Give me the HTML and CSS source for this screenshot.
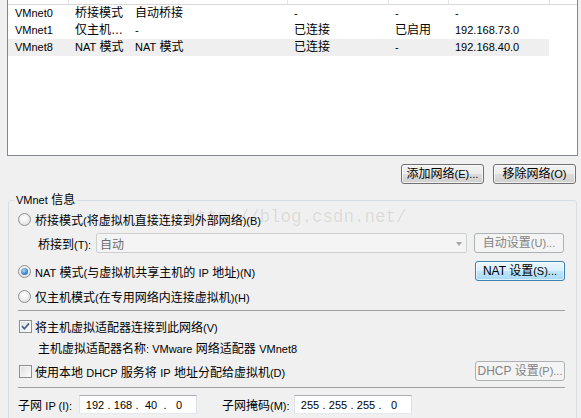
FILE: index.html
```
<!DOCTYPE html>
<html lang="zh-CN">
<head>
<meta charset="utf-8">
<title>虚拟网络编辑器</title>
<link rel="stylesheet" href="styles.css">
</head>
<body>
<div class="dlg">
  <div class="list">
    <div class="lhead"><span></span><span></span><span></span><span></span><span></span></div>
    <div class="row">
      <span class="c"><span class="l">VMnet0</span></span><span class="c">桥接模式</span><span class="c">自动桥接</span><span class="c"><span class="l">-</span></span><span class="c"><span class="l">-</span></span><span class="c"><span class="l">-</span></span>
    </div>
    <div class="row">
      <span class="c"><span class="l">VMnet1</span></span><span class="c">仅主机…</span><span class="c"><span class="l">-</span></span><span class="c">已连接</span><span class="c">已启用</span><span class="c"><span class="l">192.168.73.0</span></span>
    </div>
    <div class="row sel">
      <span class="c"><span class="l">VMnet8</span></span><span class="c"><span class="l">NAT</span> 模式</span><span class="c"><span class="l">NAT</span> 模式</span><span class="c">已连接</span><span class="c"><span class="l">-</span></span><span class="c"><span class="l">192.168.40.0</span></span>
    </div>
  </div>

  <div class="btnbar">
    <button class="btn">添加网络<span class="l">(E)...</span></button>
    <button class="btn">移除网络<span class="l">(O)</span></button>
  </div>

  <div class="group">
    <span class="legend"><span class="l">VMnet</span> 信息</span>

    <div class="line r1">
      <span class="radio"></span><span class="lbl">桥接模式<span class="l">(</span>将虚拟机直接连接到外部网络<span class="l">)(B)</span></span>
    </div>

    <div class="line r2 indent">
      <span class="blabel">桥接到<span class="l">(T):</span></span>
      <div class="combo"><span class="combo-text">自动</span><span class="arrow"></span></div>
      <button class="btn wide dis">自动设置<span class="l">(U)...</span></button>
    </div>

    <div class="line r3">
      <span class="radio on"></span><span class="lbl"><span class="l">NAT</span> 模式<span class="l">(</span>与虚拟机共享主机的 <span class="l">IP</span> 地址<span class="l">)(N)</span></span>
      <button class="btn wide focus push">NAT 设置<span class="l">(S)...</span></button>
    </div>

    <div class="line r4">
      <span class="radio"></span><span class="lbl">仅主机模式<span class="l">(</span>在专用网络内连接虚拟机<span class="l">)(H)</span></span>
    </div>

    <div class="sep s1"></div>

    <div class="line r5">
      <span class="check on"><svg viewBox="0 0 11 11" width="11" height="11"><path d="M2 5.2 L4.4 7.8 L9 2.4" fill="none" stroke="#4b5f87" stroke-width="1.7"/></svg></span><span class="lbl">将主机虚拟适配器连接到此网络<span class="l">(V)</span></span>
    </div>

    <div class="line r6 indent">
      <span class="lbl">主机虚拟适配器名称<span class="l">: VMware</span> 网络适配器 <span class="l">VMnet8</span></span>
    </div>

    <div class="line r7">
      <span class="check"></span><span class="lbl">使用本地 <span class="l">DHCP</span> 服务将 <span class="l">IP</span> 地址分配给虚拟机<span class="l">(D)</span></span>
      <button class="btn wide dis push">DHCP 设置<span class="l">(P)...</span></button>
    </div>

    <div class="sep s2"></div>

    <div class="line r8">
      <span class="flabel f1">子网 <span class="l">IP (I):</span></span>
      <div class="ip"><span class="oct">192</span><span class="dot">.</span><span class="oct">168</span><span class="dot">.</span><span class="oct">40</span><span class="dot">.</span><span class="oct">0</span></div>
      <span class="flabel f2">子网掩码<span class="l">(M):</span></span>
      <div class="ip"><span class="oct">255</span><span class="dot">.</span><span class="oct">255</span><span class="dot">.</span><span class="oct">255</span><span class="dot">.</span><span class="oct">0</span></div>
    </div>
  </div>

  <div class="wm">http://blog.csdn.net/</div>
</div>
</body>
</html>
```
FILE: styles.css
```
* { box-sizing: border-box; }

html, body {
  margin: 0;
  padding: 0;
  background: #f0f0f0;
}

body {
  font-family: "Liberation Sans", "Noto Sans CJK SC", sans-serif;
  font-size: 12px;
  color: #000;
  width: 581px;
  height: 418px;
  overflow: hidden;
}

.l {
  font-family: "Liberation Sans", sans-serif;
  font-size: 11px;
}

.dlg {
  position: relative;
  width: 581px;
  height: 418px;
  overflow: hidden;
}

/* ---------- list ---------- */
.list {
  margin-left: 7px;
  width: 571px;
  height: 156px;
  background: #fff;
  border: 1px solid #828790;
  border-top: none;
}

.lhead {
  display: grid;
  grid-template-columns: 61px 219px 101px 60px 101px;
  height: 5px;
  border-bottom: 1px solid #d8d8d8;
}

.lhead span {
  border-right: 1px solid #e3e3e3;
}

.row {
  display: grid;
  grid-template-columns: 60px 60px 159px 101px 60px 101px;
  height: 17px;
  line-height: 17px;
  width: 541px;
}

.row.sel {
  background: #efefef;
}

.c {
  padding-left: 7px;
  white-space: nowrap;
  overflow: hidden;
}

/* ---------- buttons ---------- */
.btnbar {
  display: flex;
  justify-content: flex-end;
  gap: 9px;
  margin-top: 8px;
  padding-right: 5px;
}

.btn {
  font: inherit;
  color: #000;
  width: 83px;
  height: 20px;
  padding: 0;
  line-height: 18px;
  border: 1px solid #707070;
  border-radius: 3px;
  background: linear-gradient(#f2f2f2 0%, #ebebeb 50%, #dddddd 51%, #cfcfcf 100%);
  box-shadow: inset 0 0 0 1px rgba(255, 255, 255, 0.7);
  white-space: nowrap;
  text-align: center;
}

.btn.wide {
  width: 90px;
}

.btn.dis {
  color: #838383;
  border-color: #adb2b5;
  background: #f4f4f4;
  box-shadow: none;
}

.btn.focus {
  border-color: #3c7fb1;
  background: linear-gradient(#eaf6fd 0%, #d9f0fc 50%, #bee6fd 51%, #a7d9f5 100%);
  box-shadow: inset 0 0 0 1px rgba(255, 255, 255, 0.6);
}

.push {
  margin-left: auto;
}

/* ---------- group ---------- */
.group {
  position: relative;
  margin: 16px 4px 0 8px;
  height: 260px;
  border: 1px solid #d5dfe5;
  border-radius: 3px;
  padding: 8px 11px 0 9px;
}

.legend {
  position: absolute;
  left: 5px;
  top: -9px;
  padding: 0 2px;
  line-height: 17px;
  background: #f0f0f0;
}

.line {
  display: flex;
  align-items: center;
  height: 20px;
  white-space: nowrap;
}

.indent { padding-left: 20px; }

.r1 { margin-top: 0; }
.r2 { margin-top: 4px; }
.r3 { margin-top: 8px; }
.r4 { margin-top: 5px; }
.r5 { margin-top: 5px; }
.r6 { margin-top: 1px; }
.r7 { margin-top: 4px; }
.r8 { margin-top: 7px; height: 19px; }

.sep {
  height: 1px;
  background: #a0a0a0;
}
.s1 { margin-top: 4px; }
.s2 { margin-top: 6px; }

.radio {
  position: relative;
  width: 13px;
  height: 13px;
  border-radius: 50%;
  border: 1px solid #8e8f8f;
  background: radial-gradient(circle at 45% 40%, #ffffff 0%, #f0f0f0 45%, #d4d4d4 100%);
  margin-right: 4px;
  flex: none;
}

.radio.on::after {
  content: "";
  position: absolute;
  left: 2px;
  top: 2px;
  width: 7px;
  height: 7px;
  border-radius: 50%;
  background: radial-gradient(circle at 40% 35%, #a9dcfb 0%, #3e8ad0 55%, #1b4f8a 100%);
}

.check {
  display: flex;
  align-items: center;
  justify-content: center;
  width: 13px;
  height: 13px;
  border: 1px solid #8e8f8f;
  background: linear-gradient(135deg, #dcdcdc 0%, #f2f2f2 60%, #ffffff 100%);
  box-shadow: inset 0 0 0 1px #f4f4f4;
  margin-left: 1px;
  margin-right: 3px;
  flex: none;
}

.blabel {
  width: 58px;
  flex: none;
}

.combo {
  position: relative;
  width: 371px;
  height: 20px;
  border: 1px solid #cfcfcf;
  border-radius: 2px;
  background: #f4f4f4;
  margin-right: 7px;
  display: flex;
  align-items: center;
  padding-left: 3px;
}

.combo-text {
  color: #6d6d6d;
}

.arrow {
  position: absolute;
  right: 4px;
  top: 8px;
  width: 0;
  height: 0;
  border-left: 3px solid transparent;
  border-right: 3px solid transparent;
  border-top: 4px solid #a6a6a6;
}

.flabel.f1 { width: 61px; }
.flabel.f2 { width: 72px; margin-left: 25px; }

.ip {
  display: flex;
  align-items: center;
  width: 118px;
  height: 19px;
  background: #fff;
  border: 1px solid #abadb3;
  border-color: #abadb3 #dbdfe6 #e3e9ef #e2e3ea;
  padding-left: 3px;
  font-size: 11px;
}

.oct {
  width: 24px;
  text-align: center;
}

.dot {
  width: 4px;
  text-align: center;
}

/* ---------- watermark ---------- */
.wm {
  position: absolute;
  left: 186px;
  top: 207px;
  font-family: "Liberation Mono", monospace;
  font-size: 17.5px;
  color: rgba(0, 0, 0, 0.1);
  pointer-events: none;
  white-space: nowrap;
}
```
